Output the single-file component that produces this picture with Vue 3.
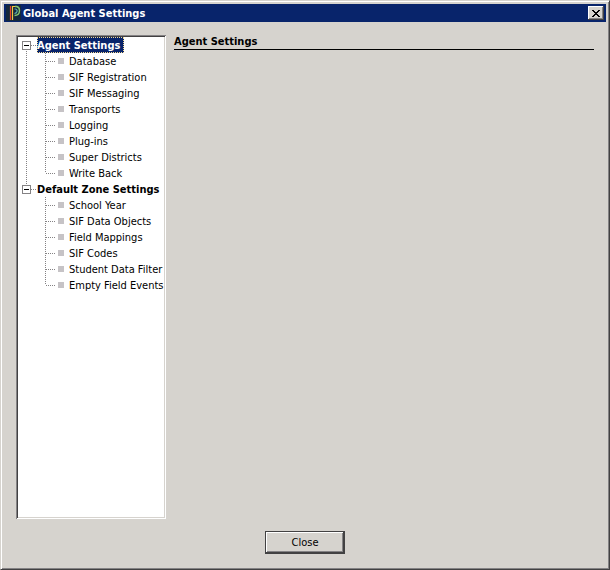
<script setup>
import { ref } from 'vue'

const groups = ref([
  {
    name: 'Agent Settings',
    open: true,
    items: ['Database', 'SIF Registration', 'SIF Messaging', 'Transports', 'Logging', 'Plug-ins', 'Super Districts', 'Write Back'],
  },
  {
    name: 'Default Zone Settings',
    open: true,
    items: ['School Year', 'SIF Data Objects', 'Field Mappings', 'SIF Codes', 'Student Data Filter', 'Empty Field Events'],
  },
])
const selected = ref('Agent Settings')
</script>

<template>
  <div class="window">
    <header class="titlebar">
      <svg class="logo" width="16" height="16" viewBox="0 0 16 16" aria-hidden="true">
        <rect width="15" height="16" fill="#14283c" />
        <path d="M4.500 1V15" stroke="#e8402c" stroke-width="1.200" fill="none" />
        <path d="M6.500 15V1.500H9" stroke="#f5c542" stroke-width="1.200" fill="none" />
        <path d="M9 1.500H10.500Q13.500 2 13.500 5.500Q13.500 10.500 8.500 10.500" stroke="#86c46e" stroke-width="1.400" fill="none" />
        <path d="M8.500 4H9.500Q11.500 4.500 11 6.500Q10.500 8.200 8.500 8.500" stroke="#5fb0a8" stroke-width="1.200" fill="none" />
      </svg>
      <h1>Global Agent Settings</h1>
      <button class="close-x" type="button" aria-label="Close window">
        <svg width="8" height="7" viewBox="0 0 8 7" shape-rendering="crispEdges" aria-hidden="true">
          <path d="M0 0h2v1h1v1h2v-1h1v-1h2v1h-1v1h-1v1h-1v1h1v1h1v1h1v1h-2v-1h-1v-1h-2v1h-1v1h-2v-1h1v-1h1v-1h1v-1h-1v-1h-1v-1h-1z" fill="#000" />
        </svg>
      </button>
    </header>

    <main class="body">
      <nav class="tree" aria-label="Settings">
        <ul>
          <li v-for="group in groups" :key="group.name" class="group">
            <div class="row">
              <button class="toggle" type="button" :aria-expanded="group.open" :aria-label="group.name" @click="group.open = !group.open">
                <svg width="9" height="9" viewBox="0 0 9 9" shape-rendering="crispEdges" aria-hidden="true">
                  <rect width="9" height="9" fill="#848284" />
                  <rect x="1" y="1" width="7" height="7" fill="#fff" />
                  <rect x="2" y="4" width="5" height="1" />
                  <rect v-if="!group.open" x="4" y="2" width="1" height="5" />
                </svg>
              </button>
              <span class="dots stub"></span>
              <button class="label strong" :class="{ selected: selected === group.name }" type="button" @click="selected = group.name">{{ group.name }}</button>
            </div>
            <ul v-if="group.open" class="children">
              <li v-for="item in group.items" :key="item" class="row child">
                <span class="dots"></span>
                <span class="bullet"></span>
                <button class="label" :class="{ selected: selected === item }" type="button" @click="selected = item">{{ item }}</button>
              </li>
            </ul>
          </li>
        </ul>
      </nav>
      <section class="panel">
        <h2>{{ selected }}</h2>
      </section>
    </main>

    <footer class="actions">
      <button class="close" type="button">Close</button>
    </footer>
  </div>
</template>

<style>
body {
  background: #d6d3ce;
}
</style>

<style scoped>
* {
  box-sizing: border-box;
}
.window {
  display: flex;
  flex-direction: column;
  min-height: 100vh;
  padding: 3px;
  border: 1px solid;
  border-color: #d6d3ce #424142 #424142 #d6d3ce;
  box-shadow: inset 1px 1px #fff, inset -1px -1px #848284;
  background: #d6d3ce;
  color: #000;
  font: 11px/16px "DejaVu Sans Condensed", "DejaVu Sans", sans-serif;
}
h1,
h2,
ul {
  margin: 0;
  padding: 0;
  font-size: 11px;
  list-style: none;
}
button {
  padding: 0;
  border: 0;
  font: inherit;
  color: inherit;
}
.titlebar {
  display: flex;
  align-items: center;
  gap: 1px;
  height: 18px;
  padding: 0 2px;
  background: #08246b;
  color: #fff;
}
h1 {
  flex: 1;
  padding-top: 2px;
}
.close-x {
  display: grid;
  place-items: center;
  width: 16px;
  height: 14px;
  background: #d6d3ce;
  box-shadow: inset -1px -1px #424142, inset 1px 1px #fff, inset -2px -2px #848284;
}
.body {
  flex: 1;
  display: flex;
  gap: 8px;
  padding: 13px 12px 12px;
}
.tree {
  width: 150px;
  padding: 2px;
  background: #fff;
  box-shadow: inset 1px 1px #848284, inset -1px -1px #fff, inset 2px 2px #424142, inset -2px -2px #d6d3ce;
}
.group {
  background: repeating-linear-gradient(#848284 0 1px, transparent 1px 2px) 8px 8px / 1px 100% no-repeat;
}
.group:last-child {
  background-position: 8px 0;
  background-size: 1px 8px;
}
.row {
  display: flex;
  align-items: center;
  height: 16px;
  padding-left: 4px;
}
.row > * {
  flex: none;
}
.toggle {
  display: grid;
  background: #fff;
}
.dots {
  width: 10px;
  height: 1px;
  background: repeating-linear-gradient(90deg, #848284 0 1px, transparent 1px 2px);
}
.stub {
  width: 6px;
}
.children {
  background: repeating-linear-gradient(#848284 0 1px, transparent 1px 2px) 27px 0 / 1px calc(100% - 8px) no-repeat;
}
.child {
  padding-left: 28px;
}
.bullet {
  width: 6px;
  height: 6px;
  margin: 0 4px 0 2px;
  background: #c6c3c6;
}
.label {
  height: 16px;
  padding: 2px 1px 0;
  line-height: 14px;
  background: none;
  white-space: nowrap;
}
.strong {
  padding: 2px 4px 0 0;
  font-weight: bold;
}
.selected {
  background: #08246b;
  color: #fff;
  outline: 1px dotted #f7db94;
  outline-offset: -1px;
}
.panel {
  flex: 1;
}
h2 {
  height: 15px;
  line-height: 14px;
  border-bottom: 1px solid #000;
}
.actions {
  display: flex;
  justify-content: center;
  padding-bottom: 12px;
}
.close {
  width: 80px;
  height: 23px;
  border: 1px solid #424142;
  background: #d6d3ce;
  box-shadow: inset -1px -1px #424142, inset 1px 1px #fff, inset -2px -2px #848284;
}
</style>
